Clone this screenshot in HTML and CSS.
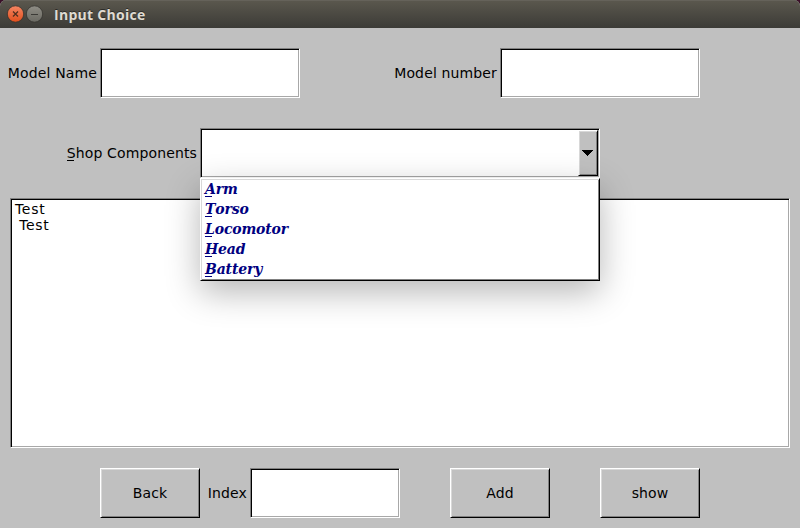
FILE: index.html
```html
<!DOCTYPE html>
<html lang="en">
<head>
<meta charset="utf-8">
<title>Input Choice</title>
<link rel="stylesheet" href="styles.css">
</head>
<body>
<div class="window">
  <header class="titlebar">
    <svg class="controls" width="40" height="18" viewBox="0 0 40 18">
      <defs>
        <linearGradient id="close" x1="0" y1="0" x2="0" y2="1"><stop offset="0" stop-color="#f58663"/><stop offset="1" stop-color="#e24f1c"/></linearGradient>
        <linearGradient id="mini" x1="0" y1="0" x2="0" y2="1"><stop offset="0" stop-color="#8f8d85"/><stop offset="1" stop-color="#6a6962"/></linearGradient>
      </defs>
      <circle cx="9.5" cy="9" r="8.2" fill="url(#close)" stroke="#35322d" stroke-width=".8"/>
      <path d="M7 6.5l5 5M12 6.5l-5 5" stroke="#53301f" stroke-width="1.3"/>
      <circle cx="28.5" cy="9" r="8.2" fill="url(#mini)" stroke="#35342f" stroke-width=".8"/>
      <path d="M25 9.5h7" stroke="#3b3a36" stroke-width="1.2"/>
    </svg>
    <span class="title">Input Choice</span>
  </header>
  <main class="form">
    <div class="row models">
      <label class="label">Model Name</label><div class="sunken field"></div>
      <label class="label">Model number</label><div class="sunken field"></div>
    </div>
    <div class="row shop">
      <label class="label"><span class="key">S</span>hop Components</label>
      <div class="sunken combo">
        <div class="raised drop"><svg width="11" height="6" viewBox="0 0 11 6" shape-rendering="crispEdges"><path d="M0 0h11L5.5 6z"/></svg></div>
        <div class="raised menu">
          <div class="item"><span class="key">A</span>rm</div>
          <div class="item"><span class="key">T</span>orso</div>
          <div class="item"><span class="key">L</span>ocomotor</div>
          <div class="item"><span class="key">H</span>ead</div>
          <div class="item"><span class="key">B</span>attery</div>
        </div>
      </div>
    </div>
    <div class="sunken output"><div>Test</div><div>&nbsp;Test</div></div>
    <div class="row actions">
      <div class="raised button">Back</div>
      <label class="label">Index</label><div class="sunken index"></div>
      <div class="raised button add">Add</div>
      <div class="raised button">show</div>
    </div>
  </main>
</div>
</body>
</html>
```
FILE: styles.css
```css
* { box-sizing: border-box; }
body {
  margin: 0;
  background: #3a1028;
  font: 14px/16px "DejaVu Sans", sans-serif;
  letter-spacing: .14px;
  color: #000;
}
.window { width: 800px; height: 528px; overflow: hidden; border-radius: 6px 6px 0 0; background: #c0c0c0; }
.titlebar {
  display: flex;
  align-items: center;
  height: 28px;
  padding-left: 6px;
  background: linear-gradient(#5b584e, #3c3b37);
  box-shadow: inset 0 1px #65625a;
}
.controls { display: block; }
.title {
  margin-left: 8px;
  padding-top: 2px;
  font: bold 14px/18px "Open Sans", sans-serif;
  letter-spacing: .28px;
  color: #dfdbd2;
  text-shadow: 0 -1px #2c2b28;
}
.form { height: 500px; padding: 20px 10px 10px; }
.row { display: flex; height: 50px; }
.label { align-self: center; padding-right: 3px; text-align: right; white-space: nowrap; }

.sunken {
  border: 1px solid;
  border-color: #808080 #fff #fff #808080;
  box-shadow: inset 1px 1px #000, inset -1px -1px #a8a8a8;
  background: #fff;
}
.raised {
  border: 1px solid;
  border-color: #fff #000 #000 #fff;
  box-shadow: inset 1px 1px #d8d8d8, inset -1px -1px #808080;
  background: #c0c0c0;
}

.models { display: grid; grid-template-columns: 100px 200px 200px 200px; margin-left: -10px; }
.shop { display: grid; grid-template-columns: 200px 400px; margin: 30px 0 20px -10px; }
.combo { position: relative; display: flex; justify-content: flex-end; padding: 1px; }
.drop { display: flex; align-items: center; justify-content: flex-start; width: 20px; height: 46px; padding-left: 3px; }
.menu {
  position: absolute;
  left: -1px;
  top: 49px;
  width: 400px;
  height: 103px;
  background: #fff;
  font: italic bold 14px/20px "DejaVu Serif", serif;
  letter-spacing: -.15px;
  color: #000080;
  box-shadow: inset 1px 1px #d8d8d8, inset -1px -1px #808080, 0 11px 34px rgba(0, 0, 0, .29);
}
.item { height: 20px; padding-left: 4px; }
.key { position: relative; }
.key::after { content: ""; position: absolute; left: 0; bottom: 0; width: 7px; height: 1px; background: currentColor; }

.output { height: 250px; padding: 2px 4px; letter-spacing: .7px; }
.output div + div { margin-left: -1px; }
.actions { margin-top: 20px; padding-left: 90px; }
.actions .label { width: 50px; }
.button { display: flex; align-items: center; justify-content: center; width: 100px; }
.index { width: 150px; }
.add { margin: 0 50px; }
```
